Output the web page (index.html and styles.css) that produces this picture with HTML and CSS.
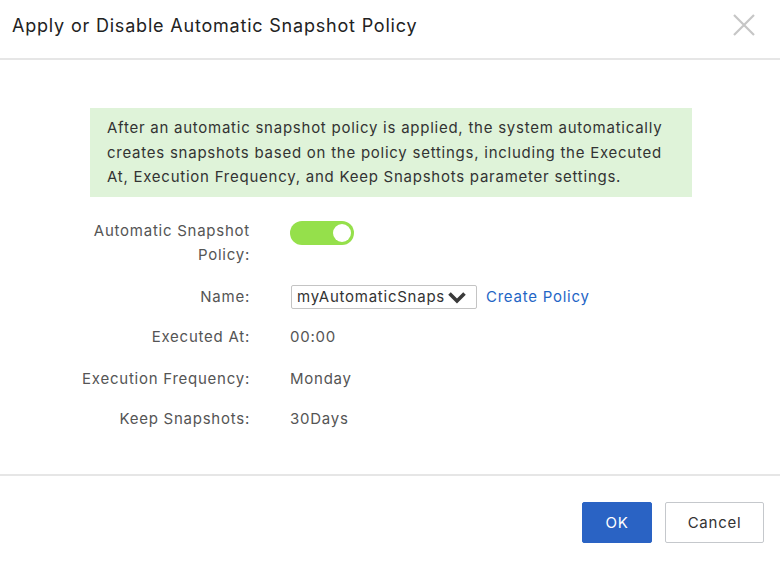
FILE: index.html
```html
<!DOCTYPE html>
<html lang="en">
<head>
<meta charset="utf-8">
<title>Apply or Disable Automatic Snapshot Policy</title>
<link rel="stylesheet" href="styles.css">
</head>
<body>
<div class="dialog">
  <div class="header">
    <h1 class="title">Apply or Disable Automatic Snapshot Policy</h1>
    <button class="close" aria-label="Close">
      <svg width="22" height="22" viewBox="0 0 22 22"><path d="M1 1L21 21M21 1L1 21" stroke="#c6c6c6" stroke-width="2.2" fill="none"/></svg>
    </button>
  </div>
  <div class="content">
    <div class="alert">After an automatic snapshot policy is applied, the system automatically creates snapshots based on the policy settings, including the Executed At, Execution Frequency, and Keep Snapshots parameter settings.</div>
    <div class="form">
      <div class="row row-toggle">
        <div class="label">Automatic Snapshot<br>Policy:</div>
        <div class="value"><span class="switch"><span class="knob"></span></span></div>
      </div>
      <div class="row row-name">
        <div class="label">Name:</div>
        <div class="value">
          <span class="select"><span class="sel-text">myAutomaticSnaps</span><svg class="chev" width="20" height="14" viewBox="0 0 20 14"><path d="M2.5 3.5L10 11L17.5 3.5" stroke="#3a3a3a" stroke-width="3.6" fill="none" stroke-linejoin="miter"/></svg></span>
          <a class="link" href="#">Create Policy</a>
        </div>
      </div>
      <div class="row row-exec">
        <div class="label">Executed At:</div>
        <div class="value">00:00</div>
      </div>
      <div class="row row-freq">
        <div class="label">Execution Frequency:</div>
        <div class="value">Monday</div>
      </div>
      <div class="row row-keep">
        <div class="label">Keep Snapshots:</div>
        <div class="value">30Days</div>
      </div>
    </div>
  </div>
  <div class="footer">
    <button class="btn btn-primary">OK</button>
    <button class="btn btn-default">Cancel</button>
  </div>
</div>
</body>
</html>
```

FILE: styles.css
```css
html, body {
  margin: 0;
  padding: 0;
  background: #ffffff;
}
body {
  font-family: Inter, Roboto, "Liberation Sans", Arial, sans-serif;
  color: #333333;
  font-size: 15px;
  letter-spacing: 0.75px;
}
.dialog {
  width: 780px;
  height: 562px;
  display: flex;
  flex-direction: column;
}
.header {
  height: 58px;
  flex: none;
  border-bottom: 2px solid #e6e6e6;
  display: flex;
  align-items: center;
  justify-content: space-between;
  padding: 0 25px 0 12px;
  box-sizing: content-box;
}
.title {
  margin: 0;
  font-size: 18px;
  font-weight: 400;
  letter-spacing: 0.8px;
  color: #222222;
  position: relative;
  top: -4px;
}
.close {
  border: 0;
  background: none;
  padding: 0;
  width: 22px;
  height: 22px;
  position: relative;
  top: -4px;
  cursor: pointer;
}
.content {
  padding-top: 48px;
  flex: 1;
}
.alert {
  margin-left: 90px;
  width: 602px;
  box-sizing: border-box;
  background: #dff3d9;
  padding: 8px 16px 7px 17px;
  line-height: 24.5px;
  color: #333333;
}
.form {
  margin-top: 22px;
  display: flex;
  flex-direction: column;
}
.row {
  display: grid;
  grid-template-columns: 250px auto;
  column-gap: 40px;
  align-items: start;
  line-height: 24px;
}
.label {
  text-align: right;
  color: #555555;
}
.value {
  display: flex;
  align-items: center;
  color: #555555;
}
.row-name { margin-top: 18px; }
.row-exec { margin-top: 16px; }
.row-freq { margin-top: 18px; }
.row-keep { margin-top: 16px; }
.switch {
  margin-top: 2px;
  width: 64px;
  height: 24px;
  border-radius: 12px;
  background: #95e04b;
  display: flex;
  align-items: center;
  justify-content: flex-end;
  padding-right: 3px;
  box-sizing: border-box;
}
.knob {
  width: 18px;
  height: 18px;
  border-radius: 50%;
  background: #ffffff;
}
.select {
  margin-left: 1px;
  width: 186px;
  height: 24px;
  box-sizing: border-box;
  border: 1px solid #c4c4c4;
  border-radius: 2px;
  display: flex;
  align-items: center;
  padding: 0 4px 0 5px;
  color: #333333;
  font-size: 15px;
  overflow: hidden;
  white-space: nowrap;
}
.sel-text {
  overflow: hidden;
  min-width: 0;
}
.chev {
  flex: none;
  margin-left: 2px;
}
.link {
  margin-left: 9px;
  color: #1f66c6;
  text-decoration: none;
}
.footer {
  flex: none;
  box-sizing: border-box;
  border-top: 2px solid #e6e6e6;
  height: 88px;
  display: flex;
  justify-content: flex-end;
  align-items: flex-start;
  padding: 26px 16px 0 0;
  gap: 13px;
}
.btn {
  height: 41px;
  font-family: inherit;
  font-size: 15px;
  letter-spacing: 0.75px;
  border-radius: 2px;
  cursor: pointer;
}
.btn-primary {
  width: 70px;
  background: #2a63c4;
  border: 1px solid #2a63c4;
  color: #ffffff;
}
.btn-default {
  width: 99px;
  background: #ffffff;
  border: 1px solid #c5c8cc;
  color: #333333;
}
```
